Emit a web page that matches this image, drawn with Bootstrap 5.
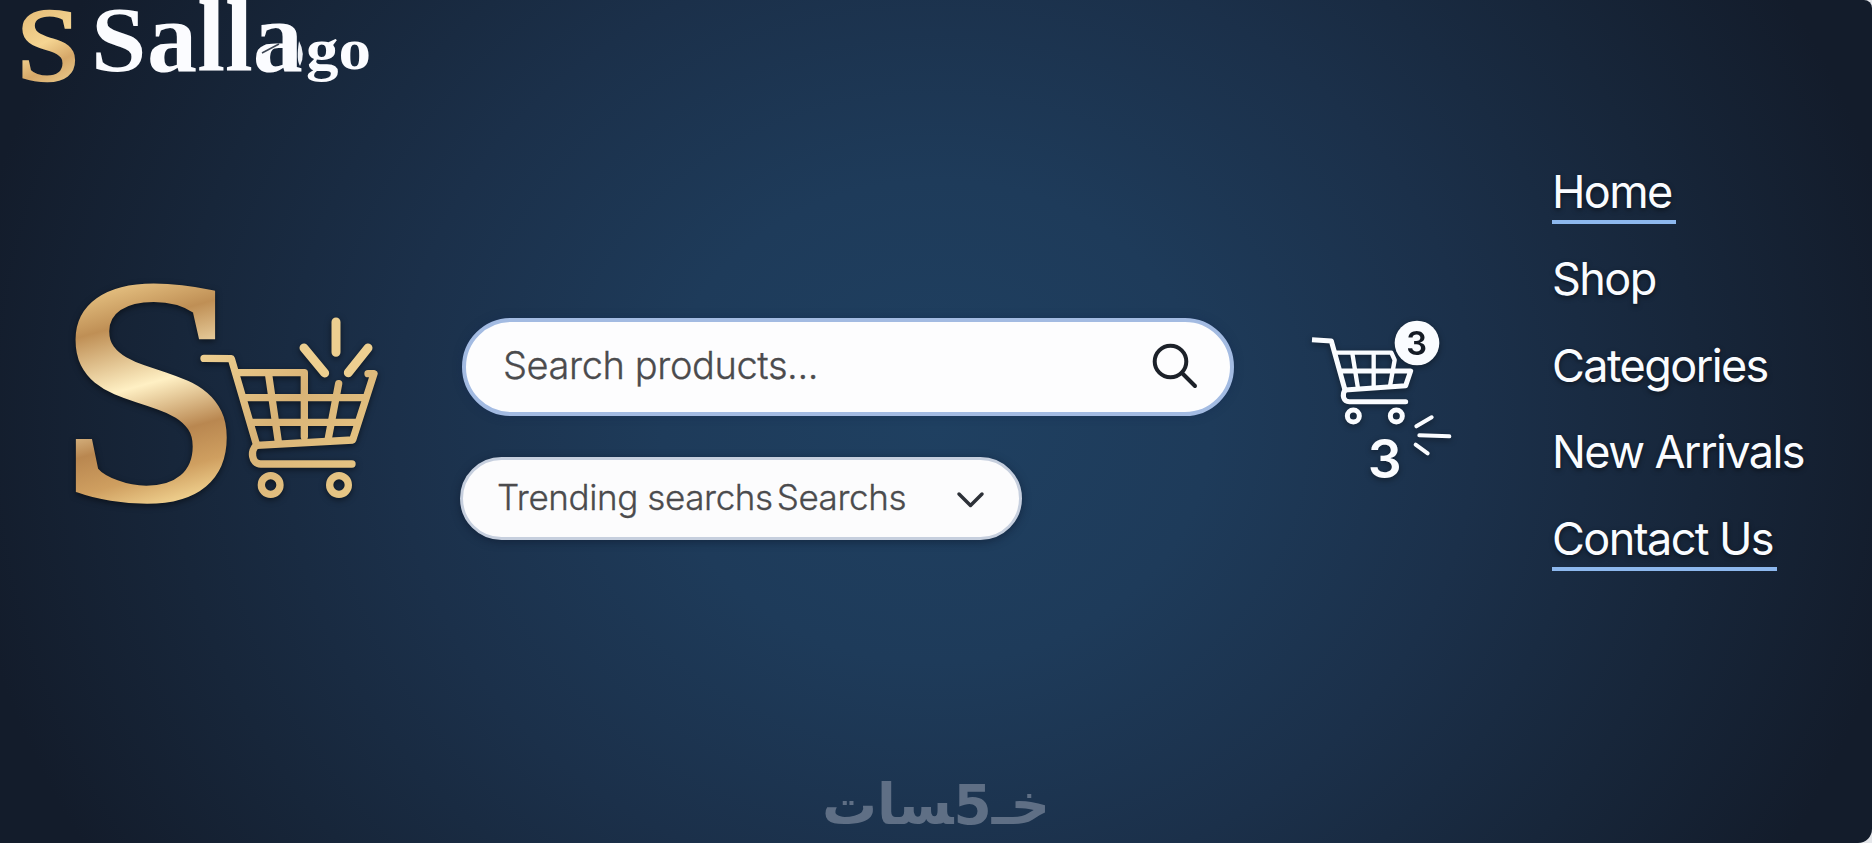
<!DOCTYPE html>
<html lang="en">
<head>
  <meta charset="UTF-8">
  <meta name="viewport" content="width=device-width, initial-scale=1">
  <title>Sallago</title>
  <link href="https://cdn.jsdelivr.net/npm/bootstrap@5.3.0/dist/css/bootstrap.min.css" rel="stylesheet">
  <style>
    body {
      background: #e4e6ea;
      font-family: Inter, "Liberation Sans", sans-serif;
    }
    svg { overflow: visible; }
    .page {
      height: 843px;
      border-radius: 0 8px 14px 0;
      background: radial-gradient(ellipse 980px 860px at 50% 50%, #1f4061 0%, #1e3b5a 28%, #1b304a 55%, #17263a 78%, #131c2b 100%);
    }
    .top-bar { height: 164px; }
    .top-bar svg { width: 400px; height: 100px; }
    .main-row { padding-left: 50px; height: 606px; }
    .big-logo {
      width: 350px;
      height: 260px;
      margin-top: 96px;
      filter: drop-shadow(0 2px 3px rgba(0, 0, 0, .5));
    }
    .search-col { width: 774px; margin-left: 60px; margin-top: 154px; }
    .search-box {
      height: 98px;
      margin-left: 2px;
      padding: 0 32px 3px 37px;
      border: 4px solid #a3bbe2;
      background: #fdfdfe;
      font-size: 38px;
      font-weight: 300;
      color: #4b4b4d;
      box-shadow: 0 0 8px rgba(20, 40, 80, .5);
    }
    .trend-box {
      width: 562px;
      height: 83px;
      margin-top: 41px;
      padding: 0 35px 2px 34px;
      border: 3px solid #c6cfde;
      background: #fcfcfd;
      font-size: 35px;
      font-weight: 300;
      color: #4b4b4d;
      box-shadow: 0 2px 8px rgba(10, 20, 40, .5);
    }
    .search-box span, .trend-box span {
      letter-spacing: -.4px;
      -webkit-text-stroke: .3px #4b4b4d;
    }
    .cart-box {
      width: 190px;
      height: 200px;
      margin-left: 56px;
      margin-top: 136px;
      filter: drop-shadow(0 2px 3px rgba(0, 0, 0, .4));
    }
    .side-links { margin-left: 72px; gap: 25.75px; }
    .side-links a {
      line-height: 56px;
      font-size: 45px;
      color: #fafcff;
      border-bottom: 4px solid transparent;
      margin-bottom: 1px;
      letter-spacing: -1.6px;
      padding: 0 4px 0 0;
      text-shadow: 0 2px 5px rgba(0, 0, 0, .5);
    }
    .side-links a.marked { border-color: #8db8ee; }
    .brand-mark svg { width: 226px; height: 60px; }
  </style>
</head>
<body>

  <div class="page d-flex flex-column overflow-hidden">
    <header class="top-bar flex-shrink-0">
      <svg viewBox="0 0 400 100" font-family="Liberation Serif, serif" font-weight="700">
        <defs>
          <linearGradient id="goldSmall" gradientUnits="userSpaceOnUse" x1="5" y1="-65" x2="45" y2="0">
            <stop offset="0" stop-color="#e6bd78"/>
            <stop offset=".45" stop-color="#f5d592"/>
            <stop offset=".75" stop-color="#d6a869"/>
            <stop offset="1" stop-color="#e6c486"/>
          </linearGradient>
        </defs>
        <text transform="translate(16 80) scale(1.15 1.02)" font-size="101.500" font-weight="400" fill="url(#goldSmall)" stroke="url(#goldSmall)" stroke-width="2.500">S</text>
        <g fill="#fbfcff">
          <text transform="translate(91 71) scale(1.06 1)" font-size="94">S</text>
          <text x="147" y="71" font-size="102" textLength="156" lengthAdjust="spacingAndGlyphs">alla</text>
          <text x="306" y="69" font-size="59" textLength="65" lengthAdjust="spacingAndGlyphs">go</text>
        </g>
        <path d="M299 41Q306 54 300 66Q296 60 299 41Z" fill="#eef1f6"/>
        <path d="M262 53L279 44" stroke="#3d4654" stroke-width="1.5"/>
      </svg>
    </header>

    <main class="main-row d-flex align-items-start flex-shrink-0">
      <svg class="big-logo flex-shrink-0" viewBox="0 0 1050 780">
        <defs>
          <linearGradient id="goldBig" gradientUnits="userSpaceOnUse" x1="150" y1="-660" x2="350" y2="20">
            <stop offset="0" stop-color="#f0cf8e"/>
            <stop offset=".22" stop-color="#bf8f55"/>
            <stop offset=".48" stop-color="#fff0c4"/>
            <stop offset=".7" stop-color="#b98750"/>
            <stop offset=".85" stop-color="#cf9f60"/>
            <stop offset="1" stop-color="#f3d694"/>
          </linearGradient>
          <linearGradient id="goldCart" gradientUnits="userSpaceOnUse" x1="450" y1="200" x2="950" y2="700">
            <stop offset="0" stop-color="#f2d596"/>
            <stop offset=".5" stop-color="#d9b376"/>
            <stop offset="1" stop-color="#e9c987"/>
          </linearGradient>
        </defs>
        <text transform="translate(17 714) scale(1.085 1.02)" font-family="Liberation Serif, serif" font-size="941" fill="url(#goldBig)" stroke="url(#goldBig)" stroke-width="16">S</text>
        <g fill="none" stroke="url(#goldCart)" stroke-width="22" stroke-linecap="round" stroke-linejoin="round">
          <path d="M462 295L544 296L620 556L908 540L972 341H954"/>
          <path d="M560 338H763V530M586 413H940M606 487H920"/>
          <path d="M656 345L685 545M866 371L834 540"/>
          <path d="M620 556C600 570 604 612 632 612H906"/>
          <circle cx="662" cy="675" r="28"/>
          <circle cx="867" cy="675" r="28"/>
        </g>
        <g stroke="#edcf90" stroke-width="27" stroke-linecap="round">
          <path d="M858 186V277M762 264L824 339M954 264L895 338"/>
        </g>
      </svg>

      <div class="search-col flex-shrink-0">
        <div class="search-box rounded-pill d-flex align-items-center justify-content-between">
          <span>Search products...</span>
          <svg width="46" height="46" viewBox="0 0 46 46" fill="none" stroke="#1c2129" stroke-width="4" stroke-linecap="round">
            <circle cx="18.500" cy="18.500" r="15.800"/>
            <path d="M30 30L43 43"/>
          </svg>
        </div>
        <div class="trend-box rounded-pill d-flex align-items-center justify-content-between">
          <div><span>Trending searchs</span><span class="ms-1">Searchs</span></div>
          <svg width="27" height="16" viewBox="0 0 27 16" fill="none" stroke="#2d3138" stroke-width="3.500" stroke-linecap="round" stroke-linejoin="round">
            <path d="M2 4L13.500 15.500L25 4"/>
          </svg>
        </div>
      </div>

      <svg class="cart-box flex-shrink-0" viewBox="0 0 570 600">
        <g fill="none" stroke="#fafcff" stroke-width="15" stroke-linejoin="round">
          <path d="M66 119L124 123L165 270L347 257L362 213H150"/>
          <path d="M138 158H304L314 180L300 258M187 160L204 265M251 160V262" stroke-width="13"/>
          <path d="M165 270C155 285 160 305 178 305H347" stroke-linecap="round"/>
          <circle cx="190" cy="348" r="18"/>
          <circle cx="319" cy="348" r="18"/>
          <path d="M379 379L425 352M388 406L478 409M377 434L413 460" stroke-width="12" stroke-linecap="round"/>
        </g>
        <circle cx="381" cy="129" r="67" fill="#fafcff"/>
        <g font-family="Inter, sans-serif" text-anchor="middle">
          <text x="380" y="164" font-size="98" font-weight="600" fill="#151b25">3</text>
          <text x="284" y="535" font-size="160" font-weight="600" fill="#fafcff">3</text>
        </g>
      </svg>

      <nav class="side-links d-flex flex-column align-items-start">
        <a href="#" class="marked text-decoration-none">Home</a>
        <a href="#" class="text-decoration-none">Shop</a>
        <a href="#" class="text-decoration-none">Categories</a>
        <a href="#" class="text-decoration-none text-nowrap">New Arrivals</a>
        <a href="#" class="marked text-decoration-none text-nowrap">Contact Us</a>
      </nav>
    </main>

    <footer class="brand-mark d-flex justify-content-center" lang="ar">
      <svg viewBox="0 0 226 60" font-family="DejaVu Sans, sans-serif" font-weight="700" fill="#5f6f85">
        <text x="113" y="54" font-size="56" text-anchor="middle" direction="rtl" textLength="228" lengthAdjust="spacingAndGlyphs">خـ5&zwj;سات</text>
      </svg>
    </footer>
  </div>

  <script src="https://cdn.jsdelivr.net/npm/bootstrap@5.3.0/dist/js/bootstrap.bundle.min.js"></script>
</body>
</html>
